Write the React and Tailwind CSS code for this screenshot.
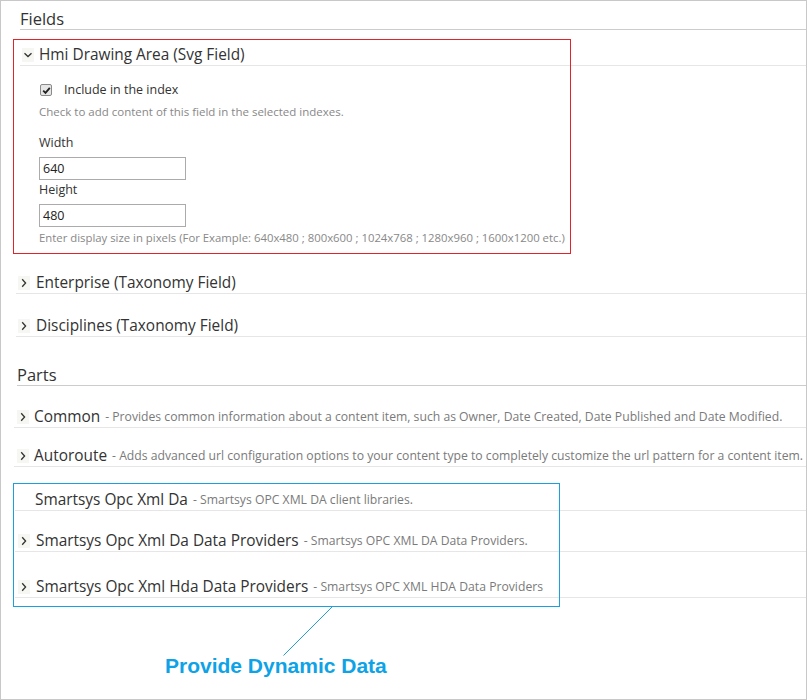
import React from 'react';

const font = { fontFamily: '"Open Sans", "Noto Sans", sans-serif' };

const Chevron = ({ open }) => (
  <span className="flex h-[14px] w-[12px] items-center justify-center bg-[#f6f6f2]">
    <svg width="10" height="10" viewBox="0 0 10 10">
      {open ? (
        <path d="M1.5 3.2 L5 6.5 L8.5 3.2" fill="none" stroke="#333" strokeWidth="1.3" />
      ) : (
        <path d="M3.2 1.2 L6.6 5 L3.2 8.8" fill="none" stroke="#333" strokeWidth="1.3" />
      )}
    </svg>
  </span>
);

const Row = ({ mt, left, chevron, title, desc, open, gap = 'ml-[3px]' }) => (
  <div className={`${mt} ${left} flex h-[21px] items-center border-b border-[#e6e6e6]`}>
    {chevron ? <Chevron open={open} /> : <span className="w-[12px]" />}
    <span className={`${gap} text-[15.4px] leading-[20px] text-[#333]`}>{title}</span>
    {desc && <span className="ml-[5px] text-[12.2px] leading-[20px] text-[#7a7a7a]">- {desc}</span>}
  </div>
);

export default function App() {
  return (
    <div className="relative h-[700px] w-[807px] overflow-hidden border border-[#c8c8c8] bg-white" style={font}>
      <div className="ml-[19px] h-[29px] border-b border-[#cccccc] pt-[8px] text-[16.5px] leading-[20px] text-[#333]">Fields</div>

      <Row mt="mt-[15px]" left="ml-[19px] pl-[2px]" chevron open gap="ml-[5px]" title="Hmi Drawing Area (Svg Field)" />

      <div className="ml-[38px] text-[13px] text-[#333]">
        <label className="mt-[14px] flex h-[20px] items-center">
          <span className="ml-[1px] flex h-[12px] w-[12px] items-center justify-center rounded-[2px] border border-[#8a8a8a] bg-[#e6e6e6]">
            <svg width="9" height="9" viewBox="0 0 9 9">
              <path d="M1.2 4.6 L3.5 6.9 L7.8 1.8" fill="none" stroke="#222" strokeWidth="1.8" />
            </svg>
          </span>
          <span className="ml-[12px] text-[12.5px]">Include in the index</span>
        </label>
        <div className="mt-[4px] h-[16px] text-[11.5px] leading-[16px] text-[#888]">Check to add content of this field in the selected indexes.</div>
        <div className="mt-[14px] h-[18px] text-[12.5px] leading-[18px]">Width</div>
        <input defaultValue="640" className="mt-[5px] block h-[23px] w-[147px] border border-[#ababab] px-[3px] text-[12.5px] text-[#222] outline-none" />
        <div className="mt-[1px] h-[18px] text-[12.5px] leading-[18px]">Height</div>
        <input defaultValue="480" className="mt-[5px] block h-[23px] w-[147px] border border-[#ababab] px-[3px] text-[12.5px] text-[#222] outline-none" />
        <div className="mt-[3px] h-[16px] text-[11.35px] leading-[16px] text-[#888]">Enter display size in pixels (For Example: 640x480 ; 800x600 ; 1024x768 ; 1280x960 ; 1600x1200 etc.)</div>
      </div>

      <Row mt="mt-[27px]" left="ml-[15px] pl-[2px]" chevron gap="ml-[6px]" title="Enterprise (Taxonomy Field)" />
      <Row mt="mt-[22px]" left="ml-[15px] pl-[2px]" chevron gap="ml-[6px]" title="Disciplines (Taxonomy Field)" />

      <div className="ml-[16px] mt-[28px] flex h-[21px] items-center border-b border-[#cccccc] text-[16.5px] text-[#333]">Parts</div>

      <Row mt="mt-[21px]" left="ml-[13px] pl-[3px]" chevron gap="ml-[5px]" title="Common" desc="Provides common information about a content item, such as Owner, Date Created, Date Published and Date Modified." />
      <Row mt="mt-[18px]" left="ml-[13px] pl-[3px]" chevron gap="ml-[5px]" title="Autoroute" desc="Adds advanced url configuration options to your content type to completely customize the url pattern for a content item." />
      <Row mt="mt-[23px]" left="ml-[14px] pl-[7px]" gap="ml-[1px]" title="Smartsys Opc Xml Da" desc="Smartsys OPC XML DA client libraries." />
      <Row mt="mt-[20px]" left="ml-[14px] pl-[3px]" chevron gap="ml-[6px]" title="Smartsys Opc Xml Da Data Providers" desc="Smartsys OPC XML DA Data Providers." />
      <Row mt="mt-[25px]" left="ml-[14px] pl-[3px]" chevron gap="ml-[6px]" title="Smartsys Opc Xml Hda Data Providers" desc="Smartsys OPC XML HDA Data Providers" />

      <div className="pointer-events-none absolute left-[12px] top-[38px] h-[215px] w-[558px] border border-[#e2232a]" />
      <div className="pointer-events-none absolute left-[12px] top-[482px] h-[124px] w-[547px] border border-[#1a9fe0]" />
      <svg className="absolute left-0 top-0" width="807" height="700">
        <line x1="331.5" y1="605.5" x2="282.5" y2="654.5" stroke="#1a9fe0" strokeWidth="1" />
      </svg>
      <div className="absolute left-[164px] top-[653px] text-[21px] font-bold leading-[24px] text-[#0ea2e6]" style={{ fontFamily: '"Liberation Sans", Arial, sans-serif' }}>
        Provide Dynamic Data
      </div>
    </div>
  );
}
